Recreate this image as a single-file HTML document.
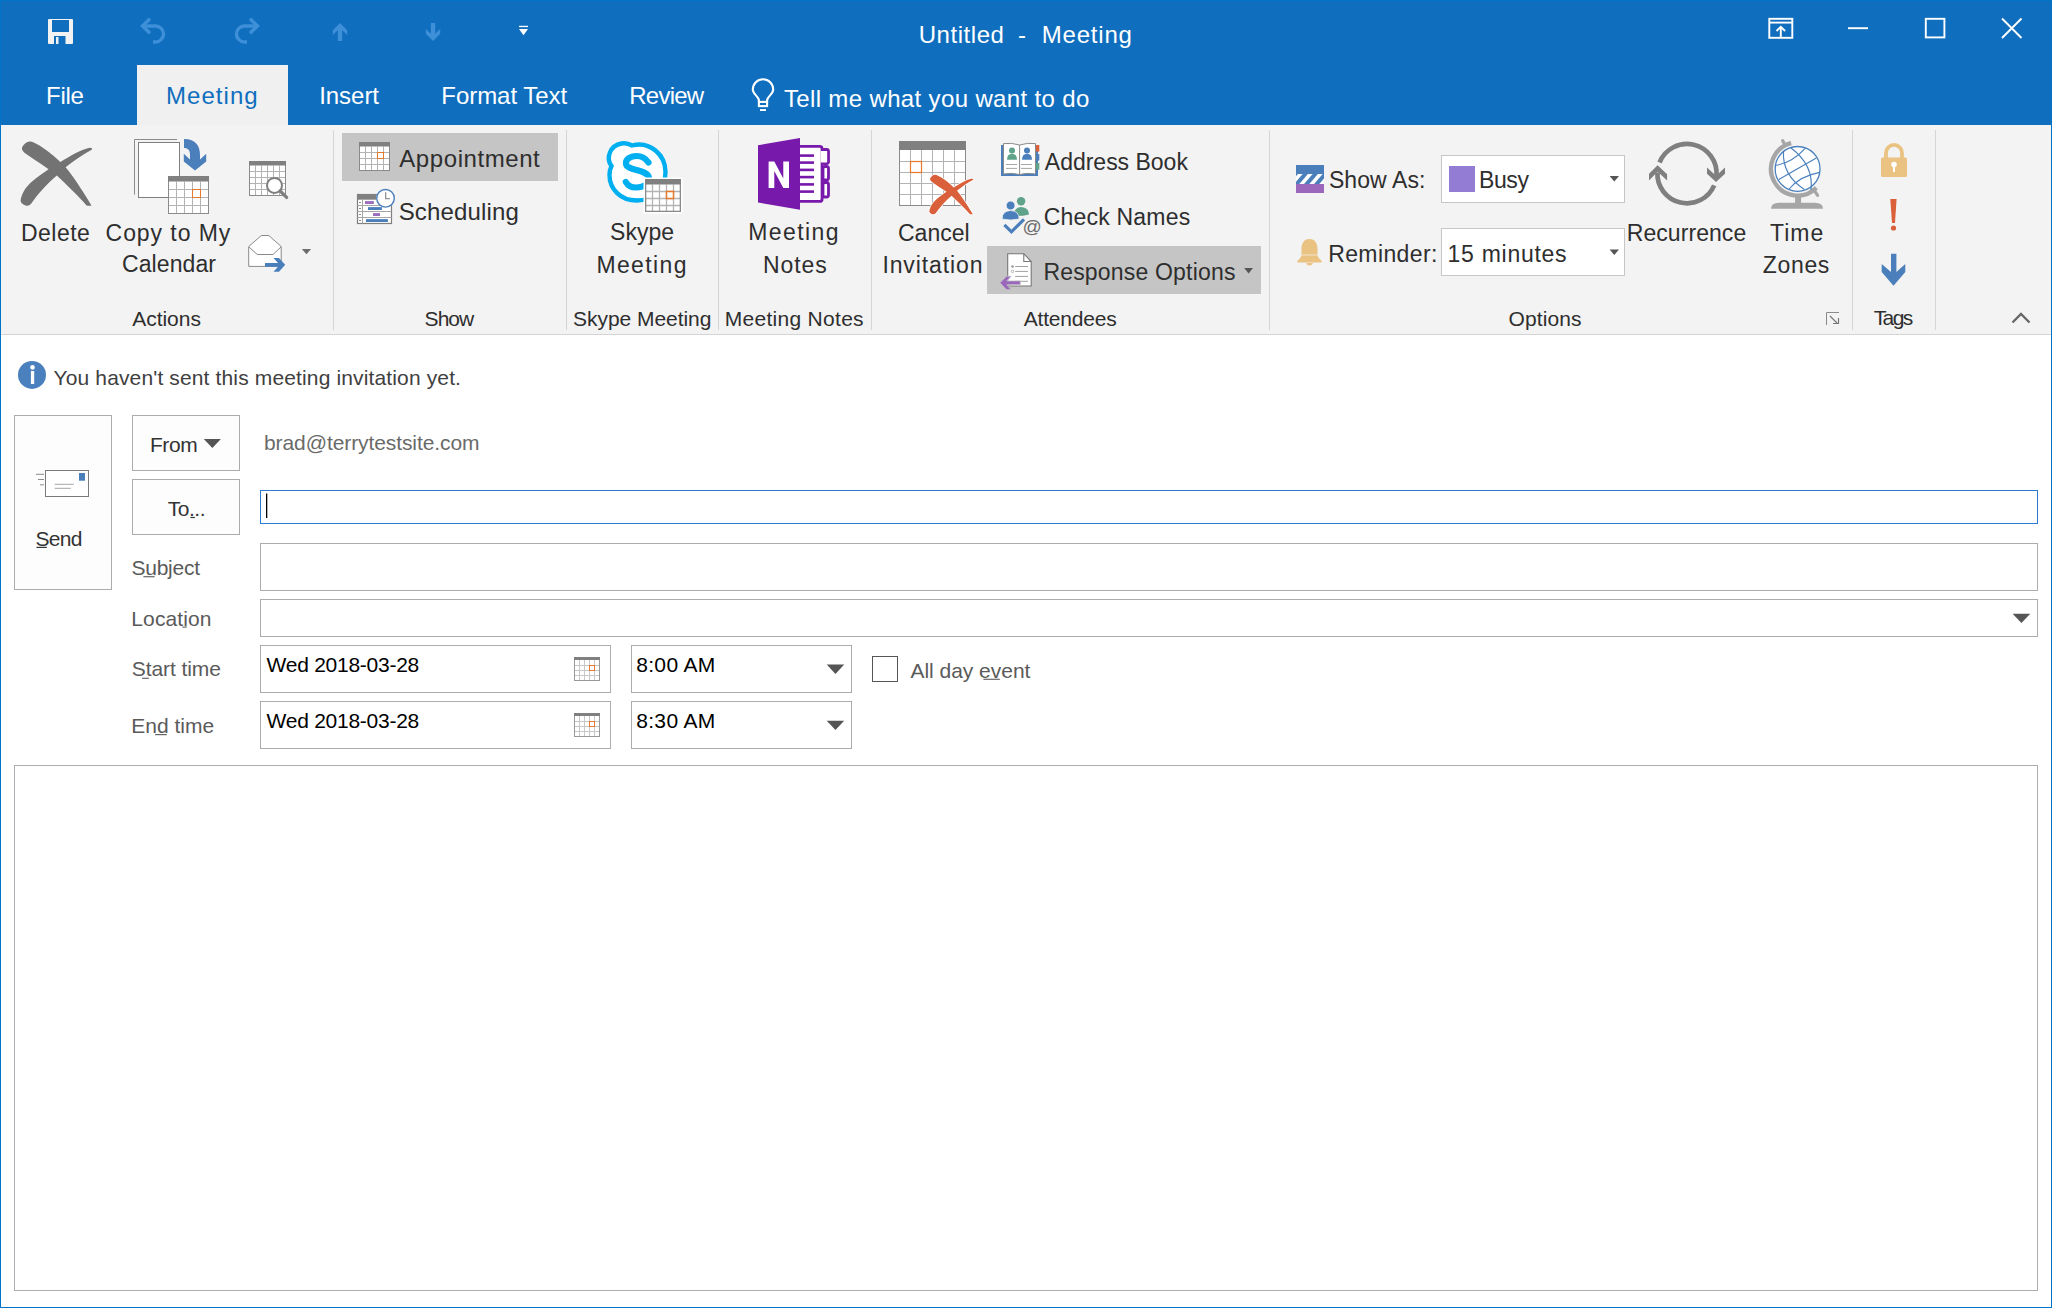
<!DOCTYPE html>
<html><head><meta charset="utf-8"><title>Untitled - Meeting</title>
<style>
html,body{margin:0;padding:0;width:2052px;height:1308px;overflow:hidden;background:#fff}
.t{position:absolute;white-space:pre;font-family:"Liberation Sans",sans-serif}
.a{position:absolute;box-sizing:border-box}
svg.ov{position:absolute;left:0;top:0}
</style></head><body>
<div class="a" style="left:0;top:0;width:2052px;height:125px;background:#106ebe"></div>
<div class="a" style="left:137px;top:65px;width:151px;height:60px;background:#f0f0f0"></div>
<div class="a" style="left:0;top:125px;width:2052px;height:209px;background:#f3f3f3"></div>
<div class="a" style="left:0;top:334px;width:2052px;height:1px;background:#d4d4d4"></div>
<div class="a" style="left:333px;top:130px;width:1px;height:200px;background:#d5d5d5"></div>
<div class="a" style="left:566px;top:130px;width:1px;height:200px;background:#d5d5d5"></div>
<div class="a" style="left:718px;top:130px;width:1px;height:200px;background:#d5d5d5"></div>
<div class="a" style="left:871px;top:130px;width:1px;height:200px;background:#d5d5d5"></div>
<div class="a" style="left:1269px;top:130px;width:1px;height:200px;background:#d5d5d5"></div>
<div class="a" style="left:1852px;top:130px;width:1px;height:200px;background:#d5d5d5"></div>
<div class="a" style="left:1935px;top:130px;width:1px;height:200px;background:#d5d5d5"></div>
<div class="a" style="left:342px;top:133px;width:216px;height:48px;background:#c5c5c5"></div>
<div class="a" style="left:987px;top:246px;width:274px;height:48px;background:#c5c5c5"></div>
<div class="a" style="left:1441px;top:155px;width:184px;height:48px;background:#fff;border:1px solid #c6c6c6"></div>
<div class="a" style="left:1441px;top:228px;width:184px;height:48px;background:#fff;border:1px solid #c6c6c6"></div>
<div class="a" style="left:14px;top:415px;width:98px;height:175px;background:#fdfdfd;border:1px solid #acacac"></div>
<div class="a" style="left:132px;top:415px;width:108px;height:56px;background:#fdfdfd;border:1px solid #acacac"></div>
<div class="a" style="left:132px;top:479px;width:108px;height:56px;background:#fdfdfd;border:1px solid #acacac"></div>
<div class="a" style="left:260px;top:490px;width:1778px;height:34px;background:#fff;border:1px solid #2b79d0"></div>
<div class="a" style="left:260px;top:543px;width:1778px;height:48px;background:#fff;border:1px solid #acacac"></div>
<div class="a" style="left:260px;top:599px;width:1778px;height:38px;background:#fff;border:1px solid #acacac"></div>
<div class="a" style="left:260px;top:645px;width:351px;height:48px;background:#fff;border:1px solid #acacac"></div>
<div class="a" style="left:631px;top:645px;width:221px;height:48px;background:#fff;border:1px solid #acacac"></div>
<div class="a" style="left:260px;top:701px;width:351px;height:48px;background:#fff;border:1px solid #acacac"></div>
<div class="a" style="left:631px;top:701px;width:221px;height:48px;background:#fff;border:1px solid #acacac"></div>
<div class="a" style="left:872px;top:656px;width:26px;height:26px;background:#fff;border:1px solid #555"></div>
<div class="a" style="left:14px;top:765px;width:2024px;height:526px;background:#fff;border:1px solid #abadb3"></div>
<div class="a" style="left:0;top:0;width:2052px;height:1308px;border:1px solid #0173c7"></div>

<svg class="ov" width="2052" height="1308" viewBox="0 0 2052 1308">
<g fill="#f2f2f2">
<path d="M48 20 Q48 19 49 19 L72 19 Q73 19 73 20 L73 43 Q73 44 72 44 L49 44 Q48 44 48 43 Z"/>
</g>
<rect x="52" y="20" width="17" height="12" fill="#106ebe"/>
<rect x="54" y="36" width="11.5" height="8" fill="#106ebe"/>
<rect x="56" y="37" width="2.5" height="7" fill="#f2f2f2"/>
<g fill="none" stroke="#3d8fd8" stroke-width="3.4">
<path d="M142.5 26 H155.5 A8 8 0 0 1 155.5 42 H153"/>
<path d="M150 18.8 L142.5 26 L150 33.2"/>
<path d="M257.5 26 H244.5 A8 8 0 0 0 244.5 42 H247"/>
<path d="M250 18.8 L257.5 26 L250 33.2"/>
</g>
<path fill="#3d8fd8" d="M340 23 L347.2 30.3 L347.2 35 L342.2 30.2 L342.2 41 L337.8 41 L337.8 30.2 L332.8 35 L332.8 30.3 Z"/>
<path fill="#3d8fd8" d="M433 41 L440.2 33.7 L440.2 29 L435.2 33.8 L435.2 23 L430.8 23 L430.8 33.8 L425.8 29 L425.8 33.7 Z"/>
<rect x="519" y="25.8" width="9" height="1.3" fill="#fff"/>
<path d="M519 29 H528 L523.5 35.2 Z" fill="#fff"/>
<g fill="none" stroke="#fff" stroke-width="1.9">
<rect x="1769.3" y="18.8" width="23" height="19"/>
<line x1="1769" y1="22.6" x2="1793" y2="22.6"/>
<path d="M1780.8 37.5 V27 M1776.5 31 L1780.8 26.8 L1785.1 31"/>
<line x1="1848" y1="28.2" x2="1868" y2="28.2"/>
<rect x="1925.8" y="18.8" width="18.6" height="18.6"/>
<path d="M2002 18.5 L2021.5 38 M2021.5 18.5 L2002 38"/>
</g>
<g fill="none" stroke="#fff" stroke-width="2.1">
<path d="M758.9 102 V100 C758 96 752.8 94 752.8 89.5 A10.2 10.2 0 0 1 773.2 89.5 C773.2 94 768 96 767.1 100 V102"/>
<rect x="758.9" y="101.9" width="8.2" height="4.2"/>
</g>
<rect x="760" y="109.1" width="6" height="1.9" fill="#fff"/>
<path fill="#737373" d="M32.07,141.77 C42,146 52,154 60.32,162.07 C70,156 80,150 88.57,147.95 Q92.5,147.2 92.1,149.42 C82,155 73,161 65.62,167.37 C76,180 85,195 91.52,205.63 L86.81,205.63 C77,195 66,184 56.79,175.61 C47,184 38,194 31.48,203.27 Q29,206.5 25.5,205.6 Q19.5,203.5 20.89,198.57 C23,191 27,186 31.48,182.09 C37,177 43,173 48.55,169.14 C40,163 32,158 24.42,152.66 Q20,149 23.24,145.5 Q27,140.5 32.07,141.77 Z"/>
<path d="M134.5 194.7 V139.5 H177" fill="none" stroke="#8c8c8c" stroke-width="1"/>
<rect x="138.5" y="142.5" width="41" height="55" fill="#fff" stroke="#7f7f7f" stroke-width="1"/>
<path fill="#4a7fbc" d="M184 139 C196 139 200 146 200 155 L200 159.5 L206.2 153.8 L206.2 161.5 L195 170.6 L183.8 161.5 L183.8 153.8 L190 159.5 L190 155 C190 150 188 148 184 148 Z"/>
<rect x="168" y="176" width="41" height="38" fill="#fff"/>
<line x1="176.50" y1="181.5" x2="176.50" y2="214" stroke="#b3b3b3" stroke-width="1"/>
<line x1="184.50" y1="181.5" x2="184.50" y2="214" stroke="#b3b3b3" stroke-width="1"/>
<line x1="192.50" y1="181.5" x2="192.50" y2="214" stroke="#b3b3b3" stroke-width="1"/>
<line x1="200.50" y1="181.5" x2="200.50" y2="214" stroke="#b3b3b3" stroke-width="1"/>
<line x1="168" y1="189.50" x2="209" y2="189.50" stroke="#b3b3b3" stroke-width="1"/>
<line x1="168" y1="197.50" x2="209" y2="197.50" stroke="#b3b3b3" stroke-width="1"/>
<line x1="168" y1="205.50" x2="209" y2="205.50" stroke="#b3b3b3" stroke-width="1"/>
<rect x="168.5" y="176.5" width="40" height="37" fill="none" stroke="#8a8a8a" stroke-width="1"/>
<rect x="168" y="176" width="41" height="5.5" fill="#808080"/>
<rect x="192.5" y="189.5" width="8.0" height="8.0" fill="#fff" stroke="#e8782a" stroke-width="1.0"/>
<rect x="249" y="161" width="37" height="35" fill="#fff"/>
<line x1="255.50" y1="165.5" x2="255.50" y2="196" stroke="#b3b3b3" stroke-width="1.0"/>
<line x1="261.50" y1="165.5" x2="261.50" y2="196" stroke="#b3b3b3" stroke-width="1.0"/>
<line x1="267.50" y1="165.5" x2="267.50" y2="196" stroke="#b3b3b3" stroke-width="1.0"/>
<line x1="273.50" y1="165.5" x2="273.50" y2="196" stroke="#b3b3b3" stroke-width="1.0"/>
<line x1="279.50" y1="165.5" x2="279.50" y2="196" stroke="#b3b3b3" stroke-width="1.0"/>
<line x1="249" y1="171.50" x2="286" y2="171.50" stroke="#b3b3b3" stroke-width="1.0"/>
<line x1="249" y1="177.50" x2="286" y2="177.50" stroke="#b3b3b3" stroke-width="1.0"/>
<line x1="249" y1="183.50" x2="286" y2="183.50" stroke="#b3b3b3" stroke-width="1.0"/>
<line x1="249" y1="189.50" x2="286" y2="189.50" stroke="#b3b3b3" stroke-width="1.0"/>
<rect x="249.5" y="161.5" width="36.0" height="34.0" fill="none" stroke="#8a8a8a" stroke-width="1.0"/>
<rect x="249" y="161" width="37" height="4.5" fill="#808080"/>
<circle cx="274.5" cy="185.4" r="7.5" fill="#fff" stroke="#7f7f7f" stroke-width="2"/>
<line x1="280.2" y1="191" x2="286.6" y2="197.4" stroke="#7f7f7f" stroke-width="3.3" stroke-linecap="round"/>
<path d="M248.7 246.5 L261.4 235.5 H268.8 L281.2 246.5 V266.4 H248.7 Z" fill="#fff" stroke="#8a8a8a" stroke-width="1"/>
<path d="M249 247 L257.3 254.5 H273 L281 247" fill="none" stroke="#8a8a8a" stroke-width="1"/>
<path fill="#4a7fbc" d="M265 263 H278 L273.5 258 H279 L285.2 264.8 L279 271.8 H273.5 L278 266.8 H265 Z"/>
<path d="M301.8 249 H311.1 L306.45 254.2 Z" fill="#6d6d6d"/>
<rect x="359" y="142" width="31" height="29" fill="#fff"/>
<line x1="365.50" y1="146.5" x2="365.50" y2="171" stroke="#b3b3b3" stroke-width="1.0"/>
<line x1="371.50" y1="146.5" x2="371.50" y2="171" stroke="#b3b3b3" stroke-width="1.0"/>
<line x1="377.50" y1="146.5" x2="377.50" y2="171" stroke="#b3b3b3" stroke-width="1.0"/>
<line x1="383.50" y1="146.5" x2="383.50" y2="171" stroke="#b3b3b3" stroke-width="1.0"/>
<line x1="359" y1="152.50" x2="390" y2="152.50" stroke="#b3b3b3" stroke-width="1.0"/>
<line x1="359" y1="158.50" x2="390" y2="158.50" stroke="#b3b3b3" stroke-width="1.0"/>
<line x1="359" y1="164.50" x2="390" y2="164.50" stroke="#b3b3b3" stroke-width="1.0"/>
<rect x="359.5" y="142.5" width="30.0" height="28.0" fill="none" stroke="#8a8a8a" stroke-width="1.0"/>
<rect x="359" y="142" width="31" height="4.5" fill="#808080"/>
<rect x="377.5" y="152.5" width="6.0" height="6.0" fill="#fff" stroke="#e8782a" stroke-width="1.0"/>
<rect x="357.5" y="194.5" width="34" height="29" fill="#fff" stroke="#7f7f7f" stroke-width="1.2"/>
<rect x="357" y="194" width="19" height="5.7" fill="#808080"/>
<line x1="357.5" y1="205.5" x2="391.5" y2="205.5" stroke="#a6a6a6" stroke-width="1"/>
<line x1="357.5" y1="211.5" x2="391.5" y2="211.5" stroke="#a6a6a6" stroke-width="1"/>
<line x1="357.5" y1="217.5" x2="391.5" y2="217.5" stroke="#a6a6a6" stroke-width="1"/>
<line x1="362.5" y1="199.7" x2="362.5" y2="223.5" stroke="#a6a6a6" stroke-width="1"/>
<rect x="359" y="202.0" width="2" height="1" fill="#8a8a8a"/>
<rect x="359" y="208.0" width="2" height="1" fill="#8a8a8a"/>
<rect x="359" y="214.0" width="2" height="1" fill="#8a8a8a"/>
<rect x="359" y="220.0" width="2" height="1" fill="#8a8a8a"/>
<rect x="365" y="201.1" width="8.800000000000011" height="2.9" fill="#9b6cc0"/>
<rect x="368" y="207.1" width="13.899999999999977" height="2.9" fill="#4a7fbc"/>
<rect x="373" y="213.1" width="7" height="2.9" fill="#9b6cc0"/>
<rect x="366" y="219.1" width="21.899999999999977" height="2.9" fill="#4a7fbc"/>
<circle cx="385.5" cy="198.3" r="8.8" fill="#fff" stroke="#4a7fbc" stroke-width="1.4"/>
<path d="M385.7 192.3 V198.7 H390" fill="none" stroke="#7f7f7f" stroke-width="1.1"/>
<path fill="#fff" stroke="#00aff0" stroke-width="4.4" d="M611.5 166 C605.5 158 610 145.5 621.5 143.5 C626.5 142.8 629.5 144 632 145.5 C650 140.5 665.5 155 665.5 172 C665.5 190 652 200.5 637 200.5 C620 200.5 609.5 188.5 609.5 175 C609.5 171 610.5 168 611.5 166 Z"/>
<path fill="none" stroke="#00aff0" stroke-width="6.2" stroke-linecap="round" d="M648.5 162.5 C645.5 158 641 156 636.5 156 C630 156 625.5 159.5 626 164 C627 171 648 169 649 178 C649.5 184 643 187.5 636 187.5 C630.5 187.5 627.5 185 625.8 182"/>
<rect x="643.5" y="177.5" width="39" height="36" fill="#fff"/>
<rect x="645" y="179" width="36" height="33" fill="#fff"/>
<line x1="652.50" y1="184.5" x2="652.50" y2="212" stroke="#b3b3b3" stroke-width="1.3"/>
<line x1="659.50" y1="184.5" x2="659.50" y2="212" stroke="#b3b3b3" stroke-width="1.3"/>
<line x1="666.50" y1="184.5" x2="666.50" y2="212" stroke="#b3b3b3" stroke-width="1.3"/>
<line x1="673.50" y1="184.5" x2="673.50" y2="212" stroke="#b3b3b3" stroke-width="1.3"/>
<line x1="645" y1="191.50" x2="681" y2="191.50" stroke="#b3b3b3" stroke-width="1.3"/>
<line x1="645" y1="198.50" x2="681" y2="198.50" stroke="#b3b3b3" stroke-width="1.3"/>
<line x1="645" y1="205.50" x2="681" y2="205.50" stroke="#b3b3b3" stroke-width="1.3"/>
<rect x="645.65" y="179.65" width="34.7" height="31.7" fill="none" stroke="#8a8a8a" stroke-width="1.3"/>
<rect x="645" y="179" width="36" height="5.5" fill="#808080"/>
<rect x="666.5" y="191.5" width="7.0" height="7.0" fill="#fff" stroke="#e8782a" stroke-width="1.5"/>
<rect x="823" y="149.5" width="5.5" height="14" rx="2" fill="#fff" stroke="#7719aa" stroke-width="2.8"/>
<rect x="823" y="166.5" width="5.5" height="13.5" rx="2" fill="#fff" stroke="#7719aa" stroke-width="2.8"/>
<rect x="823" y="182.5" width="5.5" height="14.5" rx="2" fill="#fff" stroke="#7719aa" stroke-width="2.8"/>
<rect x="797.5" y="146.4" width="24.6" height="55" rx="2.5" fill="#fff" stroke="#7719aa" stroke-width="2.9"/>
<rect x="820.6" y="151" width="6.5" height="11.5" fill="#fff"/>
<rect x="800" y="154.3" width="14" height="2.6" fill="#7719aa"/>
<rect x="800" y="161.3" width="14" height="2.6" fill="#7719aa"/>
<rect x="800" y="168.60000000000002" width="14" height="2.6" fill="#7719aa"/>
<rect x="800" y="175.8" width="14" height="2.6" fill="#7719aa"/>
<rect x="800" y="183.10000000000002" width="14" height="2.6" fill="#7719aa"/>
<rect x="800" y="190.3" width="14" height="2.6" fill="#7719aa"/>
<path fill="#7719aa" d="M758 145.3 L800 138 V209.8 L758 202.5 Z"/>
<path fill="#fff" d="M768.6 161.5 H774.3 L783.3 178.5 V161.5 H789 V187.9 H783.3 L774.3 171 V187.9 H768.6 Z"/>
<rect x="899" y="141" width="67" height="65" fill="#fff"/>
<line x1="910.50" y1="150" x2="910.50" y2="206" stroke="#b3b3b3" stroke-width="1"/>
<line x1="921.50" y1="150" x2="921.50" y2="206" stroke="#b3b3b3" stroke-width="1"/>
<line x1="932.50" y1="150" x2="932.50" y2="206" stroke="#b3b3b3" stroke-width="1"/>
<line x1="943.50" y1="150" x2="943.50" y2="206" stroke="#b3b3b3" stroke-width="1"/>
<line x1="954.50" y1="150" x2="954.50" y2="206" stroke="#b3b3b3" stroke-width="1"/>
<line x1="899" y1="161.50" x2="966" y2="161.50" stroke="#b3b3b3" stroke-width="1"/>
<line x1="899" y1="172.50" x2="966" y2="172.50" stroke="#b3b3b3" stroke-width="1"/>
<line x1="899" y1="183.50" x2="966" y2="183.50" stroke="#b3b3b3" stroke-width="1"/>
<line x1="899" y1="194.50" x2="966" y2="194.50" stroke="#b3b3b3" stroke-width="1"/>
<rect x="899.5" y="141.5" width="66" height="64" fill="none" stroke="#8a8a8a" stroke-width="1"/>
<rect x="899" y="141" width="67" height="9" fill="#808080"/>
<rect x="910.5" y="161.5" width="11.0" height="11.0" fill="#fff" stroke="#e8782a" stroke-width="1.2"/>
<g transform="translate(929.5,175) scale(0.615) translate(-20.9,-141.8)"><path d="M32.07,141.77 C42,146 52,154 60.32,162.07 C70,156 80,150 88.57,147.95 Q92.5,147.2 92.1,149.42 C82,155 73,161 65.62,167.37 C76,180 85,195 91.52,205.63 L86.81,205.63 C77,195 66,184 56.79,175.61 C47,184 38,194 31.48,203.27 Q29,206.5 25.5,205.6 Q19.5,203.5 20.89,198.57 C23,191 27,186 31.48,182.09 C37,177 43,173 48.55,169.14 C40,163 32,158 24.42,152.66 Q20,149 23.24,145.5 Q27,140.5 32.07,141.77 Z" fill="#d9603b" stroke="#fff" stroke-width="2.4" paint-order="stroke"/></g>
<rect x="1001" y="145" width="37" height="31" fill="#4a7fbc"/>
<rect x="1036" y="145" width="3.3" height="6.6" fill="#d9603b"/>
<rect x="1036" y="154" width="3.3" height="6.6" fill="#4a7fbc"/>
<rect x="1036" y="163" width="3.3" height="6.6" fill="#5fa38a"/>
<path d="M1003.5 143.6 Q1011.5 142.5 1019.6 145 Q1027.5 142.5 1035.5 143.6 V174 Q1027.5 172.5 1019.6 174.5 Q1011.5 172.5 1003.5 174 Z" fill="#fff" stroke="#8a8a8a" stroke-width="1"/>
<line x1="1019.6" y1="145" x2="1019.6" y2="174.5" stroke="#8a8a8a" stroke-width="1"/>
<circle cx="1012" cy="150.5" r="3" fill="#5fa38a"/>
<path d="M1007 159.8 Q1007 154 1012 153.8 Q1017 154 1017 159.8 Z" fill="#5fa38a"/>
<line x1="1006" y1="164.5" x2="1017" y2="164.5" stroke="#a6a6a6" stroke-width="1"/>
<line x1="1006" y1="168.4" x2="1017" y2="168.4" stroke="#a6a6a6" stroke-width="1"/>
<circle cx="1027" cy="150.5" r="3" fill="#4a7fbc"/>
<path d="M1022 159.8 Q1022 154 1027 153.8 Q1032 154 1032 159.8 Z" fill="#4a7fbc"/>
<line x1="1021" y1="164.5" x2="1032" y2="164.5" stroke="#a6a6a6" stroke-width="1"/>
<line x1="1021" y1="168.4" x2="1032" y2="168.4" stroke="#a6a6a6" stroke-width="1"/>
<circle cx="1021.1" cy="201.3" r="4.2" fill="#5fa38a"/>
<path d="M1013.5 216 Q1013.5 207.5 1021.3 207 Q1029 207.5 1029 214.5 Q1022 216.5 1013.5 216 Z" fill="#5fa38a"/>
<circle cx="1010.6" cy="205.5" r="4.4" fill="#4a7fbc" stroke="#f3f3f3" stroke-width="0.8"/>
<path d="M1002 219 Q1002 211 1010.6 210.5 Q1019.2 211 1019.2 219 Q1010.5 221 1002 219 Z" fill="#4a7fbc" stroke="#f3f3f3" stroke-width="0.8"/>
<path d="M1004.4 224.8 L1011.4 231.8 L1024 219.3" fill="none" stroke="#4a7fbc" stroke-width="3.2"/>
<text x="1022.5" y="232.5" font-family="Liberation Sans" font-size="19" fill="#6b6b6b">@</text>
<path d="M1007.7 253.7 H1023.8 L1031.2 261.5 V286 H1007.7 Z" fill="#fff" stroke="#777" stroke-width="1.1"/>
<path d="M1023.8 253.7 V261.5 H1031.2" fill="none" stroke="#777" stroke-width="1.1"/>
<circle cx="1012.5" cy="266.5" r="1.3" fill="#999"/>
<circle cx="1012.5" cy="271.4" r="1.2" fill="#fff" stroke="#999" stroke-width="0.7"/>
<line x1="1015.2" y1="266.5" x2="1028" y2="266.5" stroke="#a0a0a0" stroke-width="1"/>
<line x1="1015.2" y1="271.4" x2="1028" y2="271.4" stroke="#a0a0a0" stroke-width="1"/>
<line x1="1015.2" y1="276.4" x2="1028" y2="276.4" stroke="#a0a0a0" stroke-width="1"/>
<line x1="1015.2" y1="281.3" x2="1028" y2="281.3" stroke="#a0a0a0" stroke-width="1"/>
<path fill="#9a67bc" stroke="#c5c5c5" stroke-width="0.8" d="M999.9 282.8 L1006.5 276.2 H1011.2 L1006.8 280.9 H1020.3 V284.8 H1006.8 L1011.2 289.7 H1006.5 Z"/>
<path d="M1244.2 268 H1253 L1248.6 273.4 Z" fill="#555"/>
<rect x="1296" y="165" width="28" height="28" fill="#4a7fbc"/>
<rect x="1296" y="184" width="28" height="9" fill="#9a67bc"/>
<clipPath id="sa"><rect x="1296" y="174" width="28" height="10"/></clipPath>
<g clip-path="url(#sa)" stroke="#fff" stroke-width="3.6">
<line x1="1290" y1="186" x2="1302" y2="172"/>
<line x1="1300" y1="186" x2="1312" y2="172"/>
<line x1="1310" y1="186" x2="1322" y2="172"/>
<line x1="1320" y1="186" x2="1332" y2="172"/>
</g>
<rect x="1449" y="166" width="26" height="26" fill="#937cd3"/>
<path d="M1609.6 176 H1619 L1614.3 181.4 Z" fill="#555"/>
<path d="M1609.6 249.5 H1619 L1614.3 255 Z" fill="#555"/>
<path fill="#eac282" d="M1309.5 239 C1303.5 239 1301.5 244 1301.5 249 V255 C1301.5 257 1299 259.5 1297 261.3 Q1297 262.5 1299 262.5 H1320 Q1322 262.5 1322 261.3 C1320 259.5 1317.5 257 1317.5 255 V249 C1317.5 244 1315.5 239 1309.5 239 Z"/>
<path fill="#eac282" d="M1306 263 H1313 Q1312 265.5 1309.5 265.5 Q1307 265.5 1306 263 Z"/>
<line x1="1301.5" y1="255" x2="1317.5" y2="255" stroke="#fff" stroke-width="0.9" opacity="0.7"/>
<g fill="none" stroke="#7f7f7f" stroke-width="4.7">
<path d="M1659.55 162.5 A29.6 29.6 0 0 1 1716.5 176"/>
<path d="M1714.2 185.3 A29.6 29.6 0 0 1 1657.4 172.5"/>
</g>
<path fill="#7f7f7f" d="M1649 173.8 L1657.6 165.3 L1667.1 174.3 V180.5 L1657.6 171.8 L1649 180.5 Z"/>
<path fill="#7f7f7f" d="M1707 167.6 L1716 175.8 L1725 167.6 V173.8 L1716 181.9 L1707 173.8 Z"/>
<path d="M1791.2 143.1 A26.6 26.6 0 1 0 1816.4 187.7" fill="none" stroke="#a6a6a6" stroke-width="4.3"/>
<line x1="1785" y1="145.1" x2="1782.6" y2="140.6" stroke="#a6a6a6" stroke-width="3.2" stroke-linecap="round"/>
<line x1="1813.6" y1="189.4" x2="1817.6" y2="195.4" stroke="#a6a6a6" stroke-width="3.2" stroke-linecap="round"/>
<rect x="1795.1" y="196" width="6" height="8" fill="#a6a6a6"/>
<path d="M1771 208.8 Q1771 203 1779 202.8 H1815 Q1823 203 1823 208.8 Z" fill="#a6a6a6"/>
<circle cx="1797.6" cy="168.9" r="22.4" fill="#fff" stroke="#4a80bd" stroke-width="1.3"/>
<g fill="none" stroke="#4a80bd" stroke-width="1.15">
<path d="M1783.5 151 Q1782 175 1804.4 189.5"/>
<path d="M1790.7 147.7 Q1814 165 1811 190"/>
<path d="M1776 165.3 Q1792 163 1805.4 148.2"/>
<path d="M1778.8 179.5 L1816.3 158.1"/>
<path d="M1789.2 189 Q1800 176 1819.7 172.4"/>
</g>
<path d="M1826.5 325 V312.5 H1839" fill="none" stroke="#8a8a8a" stroke-width="1"/>
<path d="M1830 316 L1837 323 M1833 323.5 H1838.5 V318" fill="none" stroke="#777" stroke-width="1.2"/>
<path d="M1886 158 V152.9 A8 8 0 0 1 1902 152.9 V158" fill="none" stroke="#eac282" stroke-width="3.8"/>
<rect x="1881" y="157.5" width="26" height="19.5" rx="1.5" fill="#eac282"/>
<circle cx="1894" cy="164.5" r="2.8" fill="#fff"/>
<rect x="1893" y="165" width="2" height="7" fill="#fff"/>
<path fill="#d9603b" d="M1890.3 199 H1896.6 L1895 223 H1892 Z"/>
<circle cx="1893.5" cy="228" r="2.6" fill="#d9603b"/>
<path fill="#4a7fbc" d="M1891 253.7 H1896.4 V272 L1905.3 264 V272 L1893.5 285.7 L1881.7 272 V264 L1891 272 Z"/>
<path d="M2012.5 322.5 L2021 314 L2029.5 322.5" fill="none" stroke="#666" stroke-width="2.3"/>
<circle cx="32" cy="374.9" r="14" fill="#4a80bd"/>
<circle cx="32.5" cy="367.4" r="2.3" fill="#fff"/>
<rect x="30.9" y="371" width="3.3" height="13" fill="#fff"/>
<rect x="45.5" y="470.5" width="43" height="26" fill="#fff" stroke="#7a7a7a" stroke-width="1"/>
<rect x="79" y="473" width="6" height="7.7" fill="#4a7fbc"/>
<line x1="54.7" y1="484.3" x2="73.8" y2="484.3" stroke="#a6a6a6" stroke-width="1"/>
<line x1="54.7" y1="488.3" x2="70.8" y2="488.3" stroke="#a6a6a6" stroke-width="1"/>
<line x1="36" y1="474.3" x2="44" y2="474.3" stroke="#8a8a8a" stroke-width="1"/>
<line x1="38" y1="479.5" x2="44" y2="479.5" stroke="#8a8a8a" stroke-width="1"/>
<line x1="40" y1="484.8" x2="44" y2="484.8" stroke="#8a8a8a" stroke-width="1"/>
<path d="M203.8 439 H220.9 L212.35 448 Z" fill="#555"/>
<rect x="266" y="493.5" width="1.3" height="24.5" fill="#000"/>
<path d="M2012.6 613.7 H2030.3 L2021.45 623 Z" fill="#555"/>
<path d="M826.7 664.6 H844.2 L835.45 674 Z" fill="#555"/>
<path d="M826.7 720.7 H844.2 L835.45 730 Z" fill="#555"/>
<rect x="574" y="657" width="26" height="24" fill="#fff"/>
<line x1="579.50" y1="660" x2="579.50" y2="681" stroke="#c8c8c8" stroke-width="1.0"/>
<line x1="584.50" y1="660" x2="584.50" y2="681" stroke="#c8c8c8" stroke-width="1.0"/>
<line x1="589.50" y1="660" x2="589.50" y2="681" stroke="#c8c8c8" stroke-width="1.0"/>
<line x1="594.50" y1="660" x2="594.50" y2="681" stroke="#c8c8c8" stroke-width="1.0"/>
<line x1="574" y1="665.50" x2="600" y2="665.50" stroke="#c8c8c8" stroke-width="1.0"/>
<line x1="574" y1="670.50" x2="600" y2="670.50" stroke="#c8c8c8" stroke-width="1.0"/>
<line x1="574" y1="675.50" x2="600" y2="675.50" stroke="#c8c8c8" stroke-width="1.0"/>
<rect x="574.5" y="657.5" width="25.0" height="23.0" fill="none" stroke="#999" stroke-width="1.0"/>
<rect x="574" y="657" width="26" height="3" fill="#808080"/>
<rect x="589.5" y="665.5" width="5.0" height="5.0" fill="#fff" stroke="#e8782a" stroke-width="1.0"/>
<rect x="574" y="713" width="26" height="24" fill="#fff"/>
<line x1="579.50" y1="716" x2="579.50" y2="737" stroke="#c8c8c8" stroke-width="1.0"/>
<line x1="584.50" y1="716" x2="584.50" y2="737" stroke="#c8c8c8" stroke-width="1.0"/>
<line x1="589.50" y1="716" x2="589.50" y2="737" stroke="#c8c8c8" stroke-width="1.0"/>
<line x1="594.50" y1="716" x2="594.50" y2="737" stroke="#c8c8c8" stroke-width="1.0"/>
<line x1="574" y1="721.50" x2="600" y2="721.50" stroke="#c8c8c8" stroke-width="1.0"/>
<line x1="574" y1="726.50" x2="600" y2="726.50" stroke="#c8c8c8" stroke-width="1.0"/>
<line x1="574" y1="731.50" x2="600" y2="731.50" stroke="#c8c8c8" stroke-width="1.0"/>
<rect x="574.5" y="713.5" width="25.0" height="23.0" fill="none" stroke="#999" stroke-width="1.0"/>
<rect x="574" y="713" width="26" height="3" fill="#808080"/>
<rect x="589.5" y="721.5" width="5.0" height="5.0" fill="#fff" stroke="#e8782a" stroke-width="1.0"/>
<rect x="36.5" y="546.8" width="10.299999999999997" height="1.2" fill="#333"/>
<rect x="190.4" y="516.9" width="4.5" height="1.2" fill="#333"/>
<rect x="143.4" y="576.1" width="11.199999999999989" height="1.2" fill="#666"/>
<rect x="182.4" y="626.5" width="4.299999999999983" height="1.2" fill="#666"/>
<rect x="142.1" y="677.6999999999999" width="6.700000000000017" height="1.2" fill="#666"/>
<rect x="155.1" y="734.0" width="11.700000000000017" height="1.2" fill="#666"/>
<rect x="983.4" y="678.6999999999999" width="16.399999999999977" height="1.2" fill="#666"/>
</svg>
<div class="t" style="left:918.70px;top:23px;font-size:24px;line-height:24px;color:#ffffff;letter-spacing:0.557px">Untitled</div>
<div class="t" style="left:1018.10px;top:23px;font-size:24px;line-height:24px;color:#ffffff;letter-spacing:0.000px">-</div>
<div class="t" style="left:1041.70px;top:23px;font-size:24px;line-height:24px;color:#ffffff;letter-spacing:0.817px">Meeting</div>
<div class="t" style="left:46.00px;top:84px;font-size:24px;line-height:24px;color:#ffffff;letter-spacing:-0.267px">File</div>
<div class="t" style="left:166.00px;top:84px;font-size:24px;line-height:24px;color:#106ebe;letter-spacing:1.050px">Meeting</div>
<div class="t" style="left:319.20px;top:84px;font-size:24px;line-height:24px;color:#ffffff;letter-spacing:-0.040px">Insert</div>
<div class="t" style="left:441.30px;top:84px;font-size:24px;line-height:24px;color:#ffffff;letter-spacing:-0.050px">Format Text</div>
<div class="t" style="left:629.30px;top:84px;font-size:24px;line-height:24px;color:#ffffff;letter-spacing:-0.780px">Review</div>
<div class="t" style="left:783.90px;top:87px;font-size:24px;line-height:24px;color:#ffffff;letter-spacing:0.358px">Tell me what you want to do</div>
<div class="t" style="left:21.00px;top:222px;font-size:23px;line-height:23px;color:#2e2e2e;letter-spacing:0.460px">Delete</div>
<div class="t" style="left:105.60px;top:222px;font-size:23px;line-height:23px;color:#2e2e2e;letter-spacing:0.933px">Copy to My</div>
<div class="t" style="left:122.00px;top:253px;font-size:23px;line-height:23px;color:#2e2e2e;letter-spacing:0.086px">Calendar</div>
<div class="t" style="left:399.30px;top:147px;font-size:24px;line-height:24px;color:#2e2e2e;letter-spacing:0.570px">Appointment</div>
<div class="t" style="left:398.70px;top:200px;font-size:24px;line-height:24px;color:#2e2e2e;letter-spacing:0.144px">Scheduling</div>
<div class="t" style="left:610.00px;top:221px;font-size:23px;line-height:23px;color:#2e2e2e;letter-spacing:0.050px">Skype</div>
<div class="t" style="left:596.40px;top:254px;font-size:23px;line-height:23px;color:#2e2e2e;letter-spacing:1.383px">Meeting</div>
<div class="t" style="left:748.30px;top:221px;font-size:23px;line-height:23px;color:#2e2e2e;letter-spacing:1.417px">Meeting</div>
<div class="t" style="left:762.90px;top:254px;font-size:23px;line-height:23px;color:#2e2e2e;letter-spacing:0.925px">Notes</div>
<div class="t" style="left:898.00px;top:222px;font-size:23px;line-height:23px;color:#2e2e2e;letter-spacing:0.000px">Cancel</div>
<div class="t" style="left:882.40px;top:254px;font-size:23px;line-height:23px;color:#2e2e2e;letter-spacing:0.900px">Invitation</div>
<div class="t" style="left:1044.80px;top:151px;font-size:23px;line-height:23px;color:#2e2e2e;letter-spacing:-0.009px">Address Book</div>
<div class="t" style="left:1043.80px;top:206px;font-size:23px;line-height:23px;color:#2e2e2e;letter-spacing:0.190px">Check Names</div>
<div class="t" style="left:1043.40px;top:261px;font-size:23px;line-height:23px;color:#2e2e2e;letter-spacing:0.187px">Response Options</div>
<div class="t" style="left:1328.90px;top:169px;font-size:23px;line-height:23px;color:#2e2e2e;letter-spacing:0.100px">Show As:</div>
<div class="t" style="left:1479.00px;top:169px;font-size:23px;line-height:23px;color:#2e2e2e;letter-spacing:-0.400px">Busy</div>
<div class="t" style="left:1328.20px;top:243px;font-size:23px;line-height:23px;color:#2e2e2e;letter-spacing:0.387px">Reminder:</div>
<div class="t" style="left:1447.60px;top:243px;font-size:23px;line-height:23px;color:#2e2e2e;letter-spacing:0.711px">15 minutes</div>
<div class="t" style="left:1626.80px;top:222px;font-size:23px;line-height:23px;color:#2e2e2e;letter-spacing:0.056px">Recurrence</div>
<div class="t" style="left:1769.90px;top:222px;font-size:23px;line-height:23px;color:#2e2e2e;letter-spacing:1.067px">Time</div>
<div class="t" style="left:1762.80px;top:254px;font-size:23px;line-height:23px;color:#2e2e2e;letter-spacing:0.650px">Zones</div>
<div class="t" style="left:132.20px;top:308px;font-size:21px;line-height:21px;color:#2e2e2e;letter-spacing:-0.025px">Actions</div>
<div class="t" style="left:424.60px;top:308px;font-size:21px;line-height:21px;color:#2e2e2e;letter-spacing:-0.967px">Show</div>
<div class="t" style="left:573.00px;top:308px;font-size:21px;line-height:21px;color:#2e2e2e;letter-spacing:-0.042px">Skype Meeting</div>
<div class="t" style="left:724.80px;top:308px;font-size:21px;line-height:21px;color:#2e2e2e;letter-spacing:0.283px">Meeting Notes</div>
<div class="t" style="left:1023.80px;top:308px;font-size:21px;line-height:21px;color:#2e2e2e;letter-spacing:-0.200px">Attendees</div>
<div class="t" style="left:1508.50px;top:308px;font-size:21px;line-height:21px;color:#2e2e2e;letter-spacing:0.100px">Options</div>
<div class="t" style="left:1873.70px;top:307px;font-size:21px;line-height:21px;color:#2e2e2e;letter-spacing:-1.567px">Tags</div>
<div class="t" style="left:53.50px;top:367px;font-size:21px;line-height:21px;color:#404040;letter-spacing:0.139px">You haven&#x27;t sent this meeting invitation yet.</div>
<div class="t" style="left:35.50px;top:528px;font-size:21px;line-height:21px;color:#333333;letter-spacing:-0.733px">Send</div>
<div class="t" style="left:149.90px;top:434px;font-size:21px;line-height:21px;color:#333333;letter-spacing:-0.367px">From</div>
<div class="t" style="left:264.00px;top:432px;font-size:21px;line-height:21px;color:#6a6a6a;letter-spacing:-0.090px">brad@terrytestsite.com</div>
<div class="t" style="left:167.70px;top:498px;font-size:21px;line-height:21px;color:#333333;letter-spacing:-0.475px">To...</div>
<div class="t" style="left:131.50px;top:557px;font-size:21px;line-height:21px;color:#5a5a5a;letter-spacing:-0.250px">Subject</div>
<div class="t" style="left:131.30px;top:608px;font-size:21px;line-height:21px;color:#5a5a5a;letter-spacing:0.114px">Location</div>
<div class="t" style="left:131.80px;top:658px;font-size:21px;line-height:21px;color:#5a5a5a;letter-spacing:-0.078px">Start time</div>
<div class="t" style="left:131.30px;top:715px;font-size:21px;line-height:21px;color:#5a5a5a;letter-spacing:0.000px">End time</div>
<div class="t" style="left:266.60px;top:654px;font-size:21px;line-height:21px;color:#000000;letter-spacing:-0.262px">Wed 2018-03-28</div>
<div class="t" style="left:636.20px;top:654px;font-size:21px;line-height:21px;color:#000000;letter-spacing:0.333px">8:00 AM</div>
<div class="t" style="left:910.40px;top:660px;font-size:21px;line-height:21px;color:#5a5a5a;letter-spacing:-0.017px">All day event</div>
<div class="t" style="left:266.60px;top:710px;font-size:21px;line-height:21px;color:#000000;letter-spacing:-0.262px">Wed 2018-03-28</div>
<div class="t" style="left:636.20px;top:710px;font-size:21px;line-height:21px;color:#000000;letter-spacing:0.333px">8:30 AM</div>
</body></html>
